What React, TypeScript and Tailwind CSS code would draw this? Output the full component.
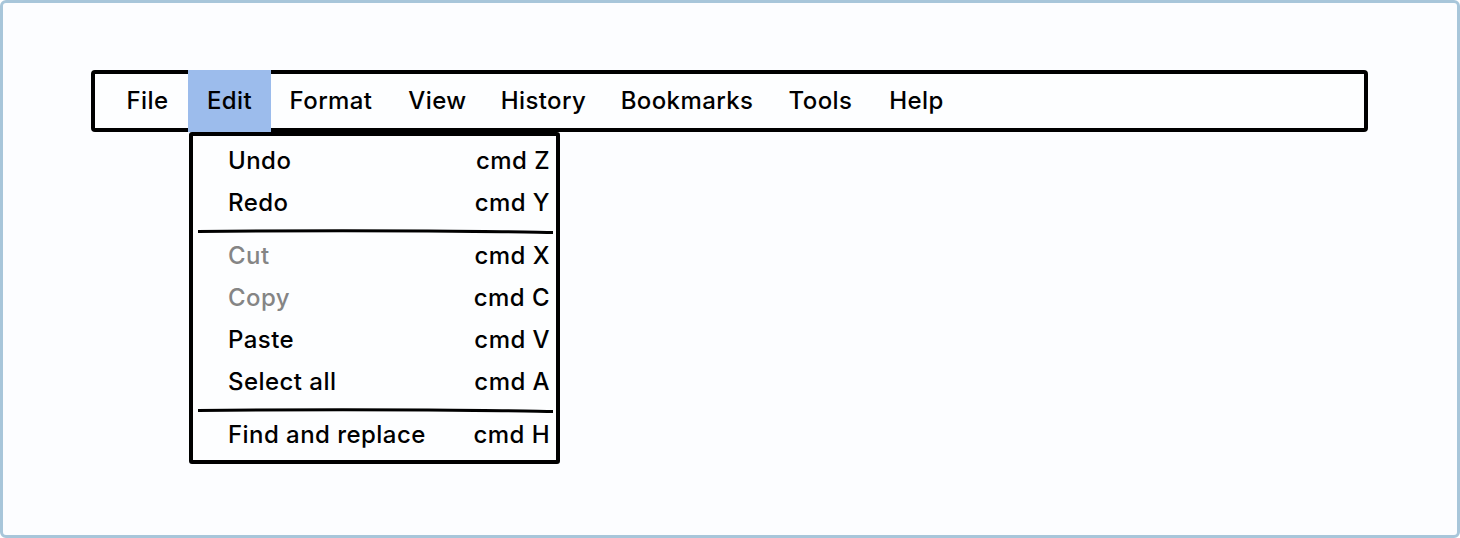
import React from "react";

const menus: { label: string; w: string }[] = [
  { label: "File", w: "w-[81px]" },
  { label: "Edit", w: "w-[83px]" },
  { label: "Format", w: "w-[120px]" },
  { label: "View", w: "w-[93px]" },
  { label: "History", w: "w-[119px]" },
  { label: "Bookmarks", w: "w-[168px]" },
  { label: "Tools", w: "w-[99px]" },
  { label: "Help", w: "w-[93px]" },
];

type Item = { label: string; key: string; disabled?: boolean } | "sep";

const items: Item[] = [
  { label: "Undo", key: "cmd Z" },
  { label: "Redo", key: "cmd Y" },
  "sep",
  { label: "Cut", key: "cmd X", disabled: true },
  { label: "Copy", key: "cmd C", disabled: true },
  { label: "Paste", key: "cmd V" },
  { label: "Select all", key: "cmd A" },
  "sep",
  { label: "Find and replace", key: "cmd H" },
];

function Separator() {
  return (
    <div className="h-[11px] flex items-end pl-[5px]">
      <svg width="355" height="6" viewBox="0 0 355 6" className="block">
        <path d="M0 2.5 Q 120 1.2 230 2 T 355 3.6" stroke="#000" strokeWidth="3" fill="none" strokeLinecap="round" />
      </svg>
    </div>
  );
}

export default function App() {
  return (
    <div
      className="w-[1460px] h-[538px] bg-[#fcfdff] border-[3px] border-[#a8c6da] rounded-[6px] relative pl-[88px] pt-[67px] text-black"
      style={{ fontFamily: "Inter, 'Open Sans', sans-serif" }}
    >
      <div className="w-[1277px] h-[62px] border-4 border-black rounded-[4px] flex items-stretch pl-[12px] bg-[#fdfeff]">
        {menus.map((m) => (
          <div
            key={m.label}
            className={`${m.w} flex items-center justify-center text-[24px] font-medium tracking-[0.4px] leading-none ${
              m.label === "Edit" ? "bg-[#9cbcec] -my-[4px]" : ""
            }`}
          >
            {m.label}
          </div>
        ))}
      </div>

      <div className="absolute left-[186px] top-[129px] w-[371px] h-[332px] border-4 border-black rounded-[3px] bg-[#fdfeff] pt-[4px]">
        {items.map((it, i) =>
          it === "sep" ? (
            <Separator key={i} />
          ) : (
            <div key={i} className="h-[42px] flex items-center justify-between pl-[35px] pr-[6px] text-[24px] font-medium tracking-[0.45px] leading-none">
              <span className={it.disabled ? "text-[#858585]" : "text-black"}>{it.label}</span>
              <span>{it.key}</span>
            </div>
          )
        )}
      </div>
    </div>
  );
}
